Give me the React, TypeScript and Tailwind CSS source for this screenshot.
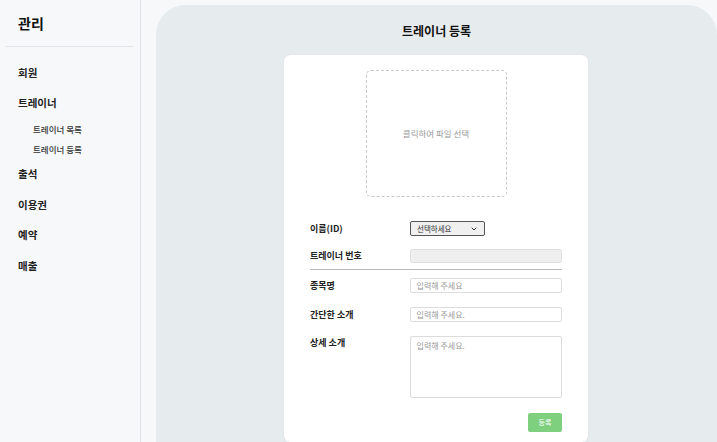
import { ChevronDown } from "lucide-react"

const menu = ["회원", "트레이너", "출석", "이용권", "예약", "매출"]

function Row({ label, children, top = false }: { label: string; children: React.ReactNode; top?: boolean }) {
  return (
    <div className={`flex ${top ? "items-start" : "items-center"}`}>
      <div className="w-[100px] text-[9px] font-bold text-[#222]">{label}</div>
      {children}
    </div>
  )
}

export default function App() {
  return (
    <div
      className="flex h-[442px] w-[717px] overflow-hidden bg-[#f7f8fa]"
      style={{ fontFamily: '"Noto Sans CJK KR", "Noto Sans", sans-serif' }}
    >
      {/* sidebar */}
      <aside className="w-[141px] shrink-0 border-r border-[#dfe2e6] px-[6px]">
        <div className="px-3 pt-[13px] pb-[12px] text-[14px] font-bold text-[#111]">관리</div>
        <div className="border-t border-[#e2e4e8]" />
        <nav className="mt-[19px] flex flex-col px-3 text-[10.5px] font-bold text-[#222]">
          <div className="h-[30px] leading-[14px]">{menu[0]}</div>
          <div className="h-[26px] leading-[14px]">{menu[1]}</div>
          <div className="flex flex-col gap-[6px] pl-[15px] text-[8.5px] font-medium text-[#333]">
            <div className="leading-[14px]">트레이너 목록</div>
            <div className="leading-[14px]">트레이너 등록</div>
          </div>
          <div className="mt-[11px] flex flex-col gap-[16.5px]">
            {menu.slice(2).map((m) => (
              <div key={m} className="leading-[14px]">
                {m}
              </div>
            ))}
          </div>
        </nav>
      </aside>

      {/* main */}
      <main className="flex-1 pt-[5px] pl-[15px]">
        <div className="flex h-[460px] flex-col items-center rounded-tl-[30px] rounded-tr-[30px] bg-[#e6ebed]">
          <h1 className="mt-[17px] text-[12px] font-bold text-[#111]">트레이너 등록</h1>
          <div className="mt-[15px] ml-[-1px] flex w-[304px] flex-col rounded-[6px] bg-white px-[26px] pt-[15px] pb-[10px] shadow-[0_0_1px_rgba(0,0,0,0.15)]">
            <div className="mx-auto flex h-[127px] w-[141px] items-center justify-center rounded-[5px] border border-dashed border-[#c8c8c8] text-[8.5px] text-[#999]">
              클릭하여 파일 선택
            </div>

            <div className="mt-[24px] flex flex-col">
              <Row label="이름(ID)">
                <div className="flex h-[15px] w-[75px] items-center justify-between rounded-[2px] border border-[#555] bg-[#f0f0f0] px-[6px] text-[7.5px] text-[#333]">
                  <span>선택하세요</span>
                  <ChevronDown size={8} strokeWidth={3} />
                </div>
              </Row>
              <div className="mt-[13px]">
                <Row label="트레이너 번호">
                  <div className="h-[14px] w-[153px] rounded-[2px] border border-[#e0e0e0] bg-[#efefef]" />
                </Row>
              </div>
              <div className="mt-[6px] border-t border-[#b8b8b8]" />
              <div className="mt-[8px] flex flex-col gap-[14px]">
                <Row label="종목명">
                  <div className="flex h-[15px] w-[153px] items-center rounded-[2px] border border-[#dcdcdc] px-[6px] text-[8px] text-[#999]">
                    입력해 주세요
                  </div>
                </Row>
                <Row label="간단한 소개">
                  <div className="flex h-[15px] w-[153px] items-center rounded-[2px] border border-[#dcdcdc] px-[6px] text-[8px] text-[#999]">
                    입력해 주세요.
                  </div>
                </Row>
                <Row label="상세 소개" top>
                  <div className="h-[62px] w-[153px] rounded-[2px] border border-[#dcdcdc] px-[6px] pt-[3px] text-[8px] text-[#999]">
                    입력해 주세요.
                  </div>
                </Row>
              </div>
              <div className="mt-[15px] flex justify-end">
                <button className="flex h-[19px] w-[34px] items-center justify-center rounded-[2px] bg-[#7ed07f] text-[7px] text-white">
                  등록
                </button>
              </div>
            </div>
          </div>
        </div>
      </main>
    </div>
  )
}
